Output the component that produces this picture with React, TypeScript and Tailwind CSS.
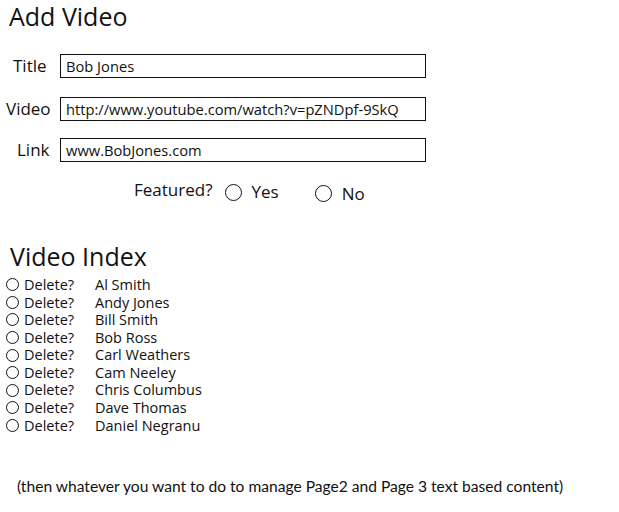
import React from "react";

const names = [
  "Al Smith",
  "Andy Jones",
  "Bill Smith",
  "Bob Ross",
  "Carl Weathers",
  "Cam Neeley",
  "Chris Columbus",
  "Dave Thomas",
  "Daniel Negranu",
];

function Field({ label, value, lx, mt }: { label: string; value: string; lx: string; mt: string }) {
  return (
    <div className={`flex items-center h-[24px] ${mt}`}>
      <div className={`w-[60px] text-[17px] ${lx}`}>{label}</div>
      <div className="w-[366px] h-[24px] border-[1.5px] border-[#111] flex items-center pl-[5px] text-[14.7px] leading-none">
        {value}
      </div>
    </div>
  );
}

export default function App() {
  return (
    <div
      className="w-[619px] h-[512px] bg-white text-[#111] relative"
      style={{ fontFamily: '"Open Sans", "Noto Sans", sans-serif' }}
    >
      <div className="pl-[9px] pt-[0px] text-[25px] leading-[32px]">Add Video</div>
      <div className="flex flex-col">
        <Field label="Title" value="Bob Jones" lx="pl-[13px]" mt="mt-[22px]" />
        <Field label="Video" value="http://www.youtube.com/watch?v=pZNDpf-9SkQ" lx="pl-[6px]" mt="mt-[19px]" />
        <Field label="Link" value="www.BobJones.com" lx="pl-[17px]" mt="mt-[17px]" />
      </div>
      <div className="mt-[18px] flex items-center h-[24px] text-[17px]">
        <span className="ml-[134px] -mt-[4px]">Featured?</span>
        <span className="ml-[13px] w-[17px] h-[17px] rounded-full border border-[#111]" />
        <span className="ml-[9px]">Yes</span>
        <span className="ml-[36px] mt-[2px] w-[17px] h-[17px] rounded-full border border-[#111]" />
        <span className="ml-[10px] mt-[4px]">No</span>
      </div>
      <div className="mt-[36px] pl-[10px] text-[25px] leading-[32px]">Video Index</div>
      <div className="mt-[4px] flex flex-col text-[14.5px]">
        {names.map((n) => (
          <div key={n} className="flex items-center h-[17.6px]">
            <span className="ml-[6px] w-[13px] h-[13px] rounded-full border border-[#111]" />
            <span className="ml-[5px] w-[71px]">Delete?</span>
            <span>{n}</span>
          </div>
        ))}
      </div>
      <div
        className="mt-[41px] pl-[17px] text-[15.6px]"
        style={{ fontFamily: 'Lato, "Open Sans", sans-serif' }}
      >
        (then whatever you want to do to manage Page2 and Page 3 text based content)
      </div>
    </div>
  );
}
